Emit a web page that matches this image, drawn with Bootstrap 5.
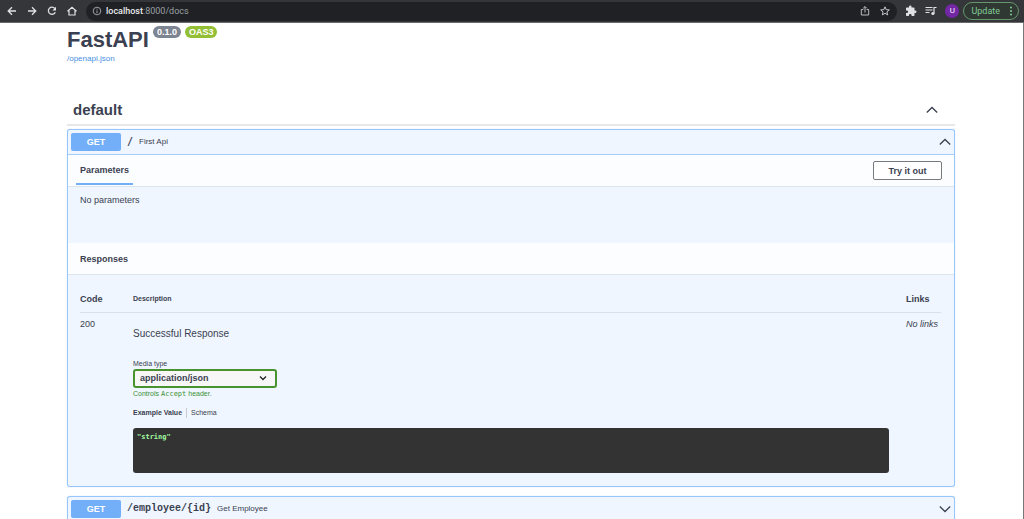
<!DOCTYPE html>
<html lang="en">
<head>
<meta charset="utf-8">
<meta name="viewport" content="width=device-width, initial-scale=1">
<title>FastAPI - Swagger UI</title>
<link href="https://cdn.jsdelivr.net/npm/bootstrap@5.3.0/dist/css/bootstrap.min.css" rel="stylesheet">
<style>
html { scrollbar-width: none; }
html::-webkit-scrollbar { display: none; }
body { font-family: "Liberation Sans", Arial, sans-serif; font-size: 9px; line-height: 12px; color: #3b4151; min-height: 100vh; }
svg { display: block; flex: none; fill: none; stroke: currentColor; }
button { color: inherit; }
.plain { background: none; border: 0; padding: 0; }
.toolbar { height: 23px; background: #35363a; border-bottom: 1px solid #69696c; color: #dfe1e5; font-family: Roboto, sans-serif; padding: 0 5px 0 6px; }
.toolbar .plain { width: 12px; height: 12px; }
.address { height: 19px; background: #202124; border-radius: 10px; color: #9aa0a6; padding: 0 6px 0 6px; }
.address b { color: #e8eaed; font-weight: 500; }
.toolbar .avatar { width: 14px; height: 14px; background: #7427a5; color: #fff; font-size: 8px; }
.update { height: 18px; border: 1px solid #66966c; border-radius: 9px; background: #303833; color: #81c995; padding: 0 4px 0 7px; }
.page-area { border-right: 1px solid #77787a; padding: 3px 68px 0 67px; min-height: calc(100vh - 23px); }
.title { font-size: 22px; line-height: 28px; font-weight: 700; }
.tag { height: 12px; border-radius: 6px; padding: 0 4px; font-weight: 700; color: #fff; background: #7d8492; }
.tag-oas { background: #93bf35; }
.spec-link { font-size: 8px; line-height: 10px; color: #4990e2; text-decoration: none; }
.section-head { height: 31px; border-bottom: 2px solid #e7e7e8; margin: 31px 0 3px; padding: 0 17px 0 6px; }
.section-head h2 { font-size: 15px; line-height: 18px; font-weight: 700; }
.op { border: 1px solid #98c6fb; box-shadow: 0 0 1px #98c6fb; border-radius: 3px; background: #eff6ff; margin-bottom: 9px; }
.op-summary { height: 24px; width: 100%; padding: 0 3px 0 3px; text-align: left; }
.method { width: 50px; height: 18px; line-height: 18px; border-radius: 2px; background: #73aef9; color: #fff; font-weight: 700; text-align: center; }
.route { font: 700 10px/12px "DejaVu Sans Mono", monospace; margin-left: 6px; }
.route-long { font: 700 10px/12px "Liberation Mono", monospace; }
.summary-text { font-size: 8px; margin-left: 6px; }
.op-details { border-top: 1px solid #a5cdfc; }
.strip { height: 32px; background: #fbfdff; border-bottom: 1px solid #dde5ed; padding: 0 12px 0 8px; }
.strip h3 { font-size: 9px; line-height: 12px; font-weight: 700; padding: 0 4px; }
.strip .tab-active { height: 30px; padding-top: 9px; border-bottom: 2px solid #73aef9; align-self: flex-start; }
.try { width: 69px; height: 19px; border: 1px solid #777b80; border-radius: 2px; background: #fff; font-weight: 700; }
.no-params { height: 56px; padding: 7px 12px; }
.responses { margin: 18px 13px 13px 12px; }
.responses table { table-layout: fixed; width: 100%; }
.responses th { height: 19px; vertical-align: top; border-bottom: 1px solid #d8e0e8; padding: 0; }
.responses td { vertical-align: top; padding: 5px 0 0; }
.responses th:first-child { width: 53px; }
.responses th:last-child { width: 35px; }
.responses .desc { padding-right: 17px; }
.small-text { font-size: 7px; line-height: 10px; }
.responses th.small-text { line-height: 12px; }
.reply { font-size: 10px; line-height: 12px; margin: 10px 0 19px; }
.media { width: 144px; height: 19px; border: 2px solid #48932f; border-radius: 3px; font-weight: 700; color: #3b4151; padding: 0 5px; appearance: none;
 background: #f7f7f7 url("data:image/svg+xml,%3Csvg xmlns='http://www.w3.org/2000/svg' viewBox='0 0 8 8'%3E%3Cpath d='M1 2.5l3 3 3-3' fill='none' stroke='%23222' stroke-width='1.3'/%3E%3C/svg%3E") no-repeat right 8px center / 8px 8px; }
.hint { color: #3b9131; margin-top: 1px; }
.hint code { color: inherit; font: 7px/10px "DejaVu Sans Mono", monospace; }
.tabs { gap: 4px; margin: 9px 0 10px; }
.tabs .plain { font-size: 7px; line-height: 10px; }
.tabs .plain + .plain { border-left: 1px solid #c4cbd3; padding-left: 4px; }
.example { height: 45px; background: #333; border-radius: 3px; margin: 0; padding: 3px 4px; color: #a2fca2; font: 700 7px/12px "DejaVu Sans Mono", monospace; }
</style>
</head>
<body>
<header class="toolbar d-flex align-items-center">
  <nav class="d-flex gap-2 me-2" aria-label="Browser">
    <button class="plain" aria-label="Back"><svg width="12" height="12" viewBox="0 0 12 12"><path d="M10 6H2.5M6 2.2L2.2 6 6 9.8" stroke-width="1.3"/></svg></button>
    <button class="plain" aria-label="Forward"><svg width="12" height="12" viewBox="0 0 12 12"><path d="M2 6h7.500M6 2.200L9.800 6 6 9.800" stroke-width="1.3"/></svg></button>
    <button class="plain" aria-label="Reload"><svg width="12" height="12" viewBox="0 0 12 12"><path d="M9.300 7.200A3.600 3.600 0 1 1 8.800 3.500" stroke-width="1.3"/><path d="M10 1.800v3.600H6.400z" fill="currentColor" stroke="none"/></svg></button>
    <button class="plain" aria-label="Home"><svg width="12" height="12" viewBox="0 0 12 12"><path d="M1.500 6.300L6 2.200l4.500 4.100M3 5.500v4.500h6V5.500" stroke-width="1.200"/></svg></button>
  </nav>
  <div class="address d-flex align-items-center flex-grow-1">
    <svg class="me-1" width="10" height="10" viewBox="0 0 10 10"><circle cx="5" cy="5" r="3.800"/><path d="M5 4.500v2.700M5 2.700v1"/></svg>
    <span role="textbox" aria-label="Address" class="flex-grow-1"><b>localhost</b>:8000/docs</span>
    <button class="plain me-2" aria-label="Share"><svg width="12" height="12" viewBox="0 0 12 12"><path d="M4.300 4.500h-2V10h7.400V4.500h-2M6 7.500V1.800M4.200 3.300L6 1.500l1.800 1.800" stroke="#b9bcc1"/></svg></button>
    <button class="plain" aria-label="Bookmark"><svg width="12" height="12" viewBox="0 0 12 12"><path d="M6 1.800l1.200 2.900 3.100.2-2.400 2 .8 3L6 8.300 3.300 9.900l.8-3-2.400-2 3.100-.2z" stroke="#c4c7cc"/></svg></button>
  </div>
  <div class="d-flex align-items-center gap-2 ms-2">
    <button class="plain" aria-label="Extensions"><svg width="12" height="12" viewBox="0 0 24 24"><path d="M20.500 11H19V7c0-1.100-.9-2-2-2h-4V3.500a2.500 2.500 0 0 0-5 0V5H4c-1.100 0-2 .9-2 2v3.800h1.500a2.700 2.700 0 0 1 0 5.400H2V20c0 1.100.9 2 2 2h3.800v-1.500a2.700 2.700 0 0 1 5.400 0V22H17c1.100 0 2-.9 2-2v-4h1.500a2.500 2.500 0 0 0 0-5z" fill="currentColor" stroke="none"/></svg></button>
    <button class="plain" aria-label="Media"><svg width="12" height="12" viewBox="0 0 12 12"><path d="M.5 2.500h7M.5 5h7M.5 7.500h4M9 8.500V2.500h2.500" stroke-width="1.200"/><circle cx="7.900" cy="8.500" r="1.600" fill="currentColor" stroke="none"/></svg></button>
    <button class="plain avatar rounded-circle" aria-label="Profile">U</button>
  </div>
  <button class="update d-flex align-items-center ms-1">Update <svg class="ms-2" width="6" height="10" viewBox="0 0 6 10"><g fill="currentColor" stroke="none"><circle cx="3" cy="1.500" r="1"/><circle cx="3" cy="5" r="1"/><circle cx="3" cy="8.500" r="1"/></g></svg></button>
</header>

<main class="page-area">
  <div class="d-flex align-items-start gap-1">
    <h1 class="title m-0">FastAPI</h1>
    <span class="tag">0.1.0</span>
    <span class="tag tag-oas">OAS3</span>
  </div>
  <a class="spec-link d-block" href="#">/openapi.json</a>

  <div class="section-head d-flex align-items-center justify-content-between">
    <h2 class="m-0">default</h2>
    <button class="plain" aria-label="Collapse section"><svg width="12" height="8" viewBox="0 0 12 8"><path d="M.8 6.500L6 1.500l5.200 5" stroke-width="1.300"/></svg></button>
  </div>

  <section class="op">
    <button class="plain op-summary d-flex align-items-center">
      <span class="method">GET</span><span class="route">/</span><span class="summary-text flex-grow-1">First Api</span>
      <svg width="12" height="8" viewBox="0 0 12 8"><path d="M.8 6.500L6 1.500l5.200 5" stroke-width="1.300"/></svg>
    </button>
    <div class="op-details">
      <div class="strip d-flex align-items-center justify-content-between">
        <h3 class="tab-active m-0">Parameters</h3>
        <button class="try p-0">Try it out</button>
      </div>
      <p class="no-params m-0">No parameters</p>
      <div class="strip d-flex align-items-center"><h3 class="m-0">Responses</h3></div>
      <div class="responses">
        <table>
          <thead><tr><th>Code</th><th class="small-text">Description</th><th>Links</th></tr></thead>
          <tbody><tr>
            <td>200</td>
            <td class="desc">
              <p class="reply">Successful Response</p>
              <label class="small-text d-block" for="media">Media type</label>
              <select class="media d-block" id="media"><option>application/json</option></select>
              <div class="small-text hint">Controls <code>Accept</code> header.</div>
              <div class="tabs d-flex">
                <button class="plain fw-bold">Example Value</button>
                <button class="plain">Schema</button>
              </div>
              <pre class="example">"string"</pre>
            </td>
            <td class="fst-italic text-nowrap">No links</td>
          </tr></tbody>
        </table>
      </div>
    </div>
  </section>

  <section class="op mb-0">
    <button class="plain op-summary d-flex align-items-center">
      <span class="method">GET</span><span class="route route-long">/employee/{id}</span><span class="summary-text flex-grow-1">Get Employee</span>
      <svg width="12" height="8" viewBox="0 0 12 8"><path d="M.8 1.500L6 6.500l5.200-5" stroke-width="1.300"/></svg>
    </button>
  </section>
</main>
<script src="https://cdn.jsdelivr.net/npm/bootstrap@5.3.0/dist/js/bootstrap.bundle.min.js"></script>
</body>
</html>
